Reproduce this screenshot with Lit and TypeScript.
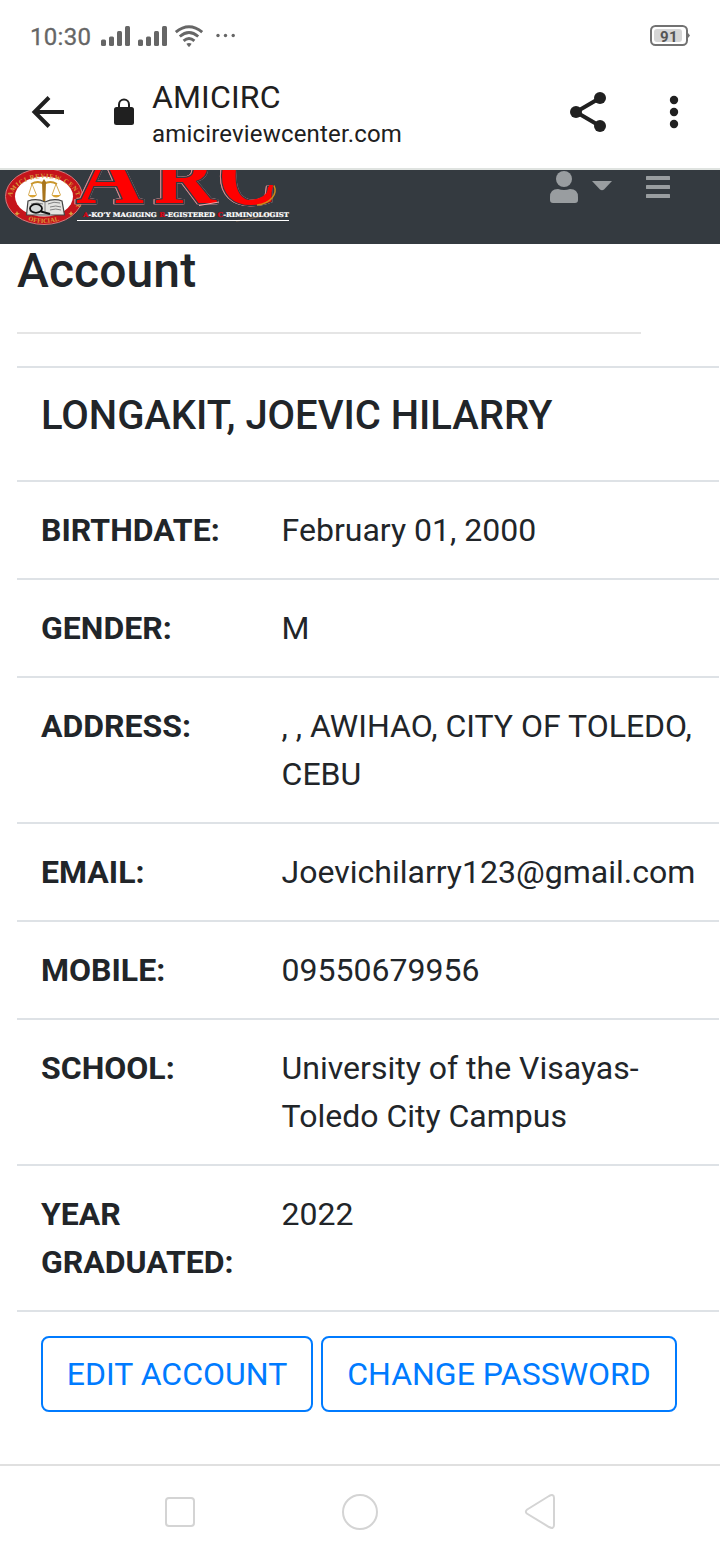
import { LitElement, html, svg, css } from "lit";
import { customElement } from "lit/decorators.js";

const ROWS: [string, string][] = [
  ["BIRTHDATE:", "February 01, 2000"],
  ["GENDER:", "M"],
  ["ADDRESS:", ", , AWIHAO, CITY OF TOLEDO, CEBU"],
  ["EMAIL:", "Joevichilarry123@gmail.com"],
  ["MOBILE:", "09550679956"],
  ["SCHOOL:", "University of the Visayas-Toledo City Campus"],
  ["YEAR GRADUATED:", "2022"],
];

@customElement("status-bar")
class StatusBar extends LitElement {
  static styles = css`
    :host { display: flex; justify-content: space-between; height: 72px; box-sizing: border-box; padding: 0 30px; color: #666; font-family: Roboto, sans-serif; }
    .left { display: flex; }
    .time { width: 70px; font-size: 24px; line-height: 74px; letter-spacing: 0.3px; white-space: nowrap; -webkit-text-stroke: 0.3px #666; }
    svg { display: block; }
    .num { font: 700 15px Roboto, sans-serif; letter-spacing: 0.3px; }
  `;
  render() {
    return html`
      <div class="left">
        <div class="time">10:30</div>
        <svg width="150" height="72" viewBox="100 0 150 72" fill="#666">
          ${[101, 138].map((x) => svg`
            <rect x=${x} y="39.500" width="5" height="6.500" rx="1.500"/>
            <rect x=${x + 8} y="36.500" width="5" height="9.500" rx="1.500"/>
            <rect x=${x + 16} y="31" width="5" height="15" rx="1.500"/>
            <rect x=${x + 24} y="26" width="5" height="20" rx="1.500"/>`)}
          <g fill="none" stroke="#666" stroke-width="2.900">
            <path d="M175.800 32.200Q189 21.300 202.200 32.200"/>
            <path d="M179.800 36.500Q189 28.700 198.200 36.500"/>
            <path d="M183.600 40.800Q189 36.300 194.400 40.800"/>
          </g>
          <path d="M186.400 43.800Q189 42 191.600 43.800L189.700 46.500Q189 47.200 188.300 46.500Z"/>
          <circle cx="218" cy="35.500" r="1.700"/><circle cx="225.500" cy="35.500" r="1.700"/><circle cx="233.200" cy="35.500" r="1.700"/>
        </svg>
      </div>
      <svg width="42" height="72" viewBox="648 0 42 72">
        <rect x="651" y="26" width="36" height="19" rx="4.500" fill="#fff" stroke="#727272" stroke-width="2"/>
        <path d="M688 33L690 35.500L688 38Z" fill="#727272"/>
        <rect x="654" y="29" width="28" height="13" rx="3" fill="#d6d6d6"/>
        <text class="num" x="660" y="41.500" fill="#555">91</text>
      </svg>`;
  }
}

@customElement("browser-bar")
class BrowserBar extends LitElement {
  static styles = css`
    :host { display: flex; height: 98px; box-sizing: border-box; border-bottom: 2px solid #dfe3e0; color: #202020; font-family: Roboto, sans-serif; }
    svg { display: block; flex: none; }
    .titles { flex: 1; white-space: nowrap; }
    .title { font-size: 32px; line-height: 40px; padding: 5px 0 1px; letter-spacing: 0.15px; }
    .host { font-size: 24px; line-height: 32px; letter-spacing: 0.17px; }
  `;
  render() {
    return html`
      <svg width="152" height="96" viewBox="0 72 152 96" fill="#202020">
        <path d="M64 112H35M49 97.500L34.500 112L49 126.500" fill="none" stroke="#202020" stroke-width="4"/>
        <rect x="114" y="107" width="20" height="18" rx="2.500"/>
        <path d="M119 108V104.500A5 5 0 0 1 129 104.500V108" fill="none" stroke="#202020" stroke-width="2"/>
      </svg>
      <div class="titles">
        <div class="title">AMICIRC</div>
        <div class="host">amicireviewcenter.com</div>
      </div>
      <svg width="170" height="96" viewBox="550 72 170 96" fill="#202020">
        <path d="M600 98L576 112L600 126" fill="none" stroke="#202020" stroke-width="4"/>
        <circle cx="600" cy="98" r="6"/><circle cx="576" cy="112" r="6"/><circle cx="600" cy="126" r="6"/>
        <circle cx="674" cy="100" r="4.200"/><circle cx="674" cy="112" r="4.200"/><circle cx="674" cy="124" r="4.200"/>
      </svg>`;
  }
}

@customElement("site-header")
class SiteHeader extends LitElement {
  static styles = css`
    :host { display: flex; justify-content: space-between; height: 74px; background: #343a40; overflow: hidden; }
    svg { display: block; }
    .arc { font-family: "Liberation Serif", serif; font-weight: 700; fill: #f00; stroke: #343a40; stroke-width: 2.4; paint-order: stroke; filter: drop-shadow(0.8px 0.8px 0 #f3a5a8) drop-shadow(-0.4px 0 0 #d98a90); }
    .tag { font: 900 6.5px "DejaVu Serif", serif; fill: #fff; stroke: #fff; stroke-width: 0.2; }
    .ring { font: 700 6.5px "Liberation Serif", serif; fill: #d9a03a; }
    .top { letter-spacing: 0.7px; }
    .red { fill: #e00010; stroke: #e00010; }
  `;
  letter(ch: string, x: number, y: number, size: number, w: number) {
    return svg`<text class="arc" x=${x} y=${y} font-size=${size} textLength=${w} lengthAdjust="spacingAndGlyphs">${ch}</text>`;
  }
  render() {
    return html`
      <svg width="300" height="74" viewBox="0 170 300 74">
        <defs>
          <path id="top" d="M12 206A33 22.500 0 1 1 76 206"/>
          <path id="bottom" d="M9 198A35 25 0 0 0 79 198"/>
        </defs>
        <ellipse cx="44" cy="196.500" rx="38.500" ry="28" fill="#c5141b" stroke="#d9777b" stroke-width="1"/>
        <ellipse cx="44" cy="196.500" rx="29" ry="20" fill="#fff"/>
        <text class="ring top"><textPath href="#top" startOffset="9">AMICI REVIEW CENTER</textPath></text>
        <text class="ring"><textPath href="#bottom" startOffset="31">OFFICIAL</textPath></text>
        <path d="M17 211L18 213L20 213.500L18 214.500L17 216L16 214.500L14.500 213.500L16 213ZM71 211L72 213L73.500 213.500L72 214.500L71 216L70 214.500L68.500 213.500L70 213Z" fill="#d9a03a"/>
        <g fill="none" stroke="#c9962c" stroke-width="1.300">
          <path d="M31 184Q38 180 44 184Q50 180 57 184" stroke-width="1.800"/>
          <path d="M32 184L28.500 195M32 184L36.500 195M56 184L52 195M56 184L60.500 195" stroke-width=".8"/>
        </g>
        <path d="M28 195H37Q32.500 200 28 195ZM51.500 195H61Q56 200 51.500 195Z" fill="#d9a436"/>
        <path d="M42 182L44 179L46 182L45.300 202H42.700Z" fill="#a8741c"/>
        <path d="M28 201Q37 198 45 202Q54 198 62 201L64.500 215H26.500Z" fill="#e3e3e0" stroke="#444" stroke-width="1.200"/>
        <path d="M31 204Q37 202 43 204M48 204Q54 201 60 203M50 207Q56 205 61 207M50 210Q56 208 61 210M45 203V213" fill="none" stroke="#777" stroke-width=".9"/>
        <ellipse cx="36" cy="208.500" rx="6" ry="4.300" fill="#d4d8d8" stroke="#111" stroke-width="1.800"/>
        <path d="M41 211.500L50 214" stroke="#111" stroke-width="2.200"/>
        <path d="M84 202.500H78L76 202Q82 198 86 190" fill="none" stroke="#f00" stroke-width="1.500"/>
        ${this.letter("A", 76, 203, 76, 68)}
        ${this.letter("R", 154, 202.500, 74, 62)}
        <path d="M199 205.500L219 202" stroke="#f3a5a8" stroke-width="1"/>
        ${this.letter("C", 218, 203.500, 86, 60)}
        <path d="M248 202Q270 201 271 185" fill="none" stroke="#f00" stroke-width="4"/>
        <path d="M274 185.500Q277 192 272 198Q267 204 257 205" fill="none" stroke="#cf8a18" stroke-width="1.500"/>
        <path d="M236 221Q262 217 272 212" fill="none" stroke="#8d6c4c" stroke-width="1.500" opacity=".6"/>
        <text class="tag" x="83" y="216.500" textLength="206" lengthAdjust="spacingAndGlyphs"><tspan class="red">A</tspan>-KO'Y MAGIGING <tspan class="red">R</tspan>-EGISTERED <tspan class="red">C</tspan>-RIMINOLOGIST</text>
        <path d="M77 220.500H289" stroke="#fff" stroke-width="1"/>
      </svg>
      <svg width="180" height="74" viewBox="540 170 180 74" fill="#999da0">
        <circle cx="564" cy="179" r="8"/>
        <path d="M550 200V197Q550 189 558 189Q564 191 570 189Q578 189 578 197V200Q578 203 575 203H553Q550 203 550 200Z"/>
        <path d="M592 181H612L604 189.500Q602 191 600 189.500Z"/>
        <rect x="646" y="176" width="24" height="4" rx=".5"/><rect x="646" y="185" width="24" height="4" rx=".5"/><rect x="646" y="194" width="24" height="4" rx=".5"/>
      </svg>`;
  }
}

@customElement("account-page")
class AccountPage extends LitElement {
  static styles = css`
    :host { display: block; height: 1220px; padding-left: 17px; box-sizing: border-box; color: #212529; font-family: Roboto, sans-serif; font-size: 32px; line-height: 48px; }
    h4 { margin: 0; height: 88px; font-size: 48px; line-height: 54px; font-weight: 500; letter-spacing: 0.1px; }
    .rule { width: 624px; height: 2px; background: #e5e5e5; margin-bottom: 32px; }
    .table { width: 702px; }
    .name { height: 114px; box-sizing: border-box; border-top: 2px solid #dee2e6; padding: 24px 24px 0; font-size: 40px; font-weight: 500; letter-spacing: -0.04px; white-space: nowrap; }
    .row { display: grid; grid-template-columns: 240.6px 1fr; border-top: 2px solid #dee2e6; }
    .key, .value { padding: 24px 0 24px 24px; }
    .key { font-weight: 700; padding-right: 20px; }
    .actions { display: flex; gap: 8px; border-top: 2px solid #dee2e6; padding: 24px; }
    button { box-sizing: border-box; height: 76px; padding: 0; border: 2px solid #007bff; border-radius: 8px; background: #fff; color: #007bff; font: 32px/48px Roboto, sans-serif; white-space: nowrap; }
    .edit { width: 272px; }
    .change { width: 356px; }
  `;
  render() {
    return html`
      <h4>Account</h4>
      <div class="rule"></div>
      <div class="table">
        <div class="name">LONGAKIT, JOEVIC HILARRY</div>
        ${ROWS.map(([k, v]) => html`<div class="row"><div class="key">${k}</div><div class="value">${v}</div></div>`)}
        <div class="actions">
          <button class="edit">EDIT ACCOUNT</button>
          <button class="change">CHANGE PASSWORD</button>
        </div>
      </div>`;
  }
}

@customElement("system-nav")
class SystemNav extends LitElement {
  static styles = css`
    :host { display: block; height: 96px; box-sizing: border-box; border-top: 2px solid #e0e0e0; }
    svg { display: block; }
  `;
  render() {
    return html`
      <svg width="720" height="94" viewBox="0 1466 720 94" fill="none" stroke="#d4d4d4" stroke-width="2">
        <rect x="166" y="1498" width="28" height="28" rx="3"/>
        <circle cx="360" cy="1512" r="17"/>
        <path d="M527.200 1509.500L549 1496Q554 1493.500 554 1498V1525Q554 1529.500 549 1527L527.200 1513.800Q524.500 1511.600 527.200 1509.500Z"/>
      </svg>`;
  }
}

@customElement("app-root")
class AppRoot extends LitElement {
  static styles = css`
    :host { display: block; width: 720px; height: 1560px; background: #fff; overflow: hidden; }
  `;
  render() {
    return html`
      <status-bar></status-bar>
      <browser-bar></browser-bar>
      <site-header></site-header>
      <account-page></account-page>
      <system-nav></system-nav>`;
  }
}
